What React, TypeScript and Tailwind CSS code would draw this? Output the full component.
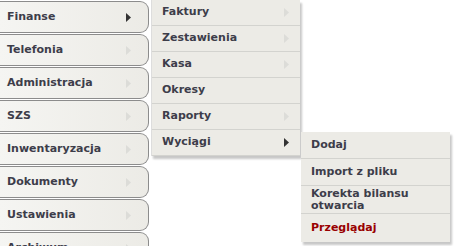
import React from "react";

const mainItems = [
	"Finanse",
	"Telefonia",
	"Administracja",
	"SZS",
	"Inwentaryzacja",
	"Dokumenty",
	"Ustawienia",
	"Archiwum",
];

const financeItems = [
	{ label: "Faktury", arrow: "light" },
	{ label: "Zestawienia", arrow: "light" },
	{ label: "Kasa", arrow: "light" },
	{ label: "Okresy", arrow: "none" },
	{ label: "Raporty", arrow: "light" },
	{ label: "Wyciągi", arrow: "dark" },
];

const Arrow: React.FC<{ dark?: boolean }> = ({ dark }) => (
	<svg width="5" height="9" viewBox="0 0 5 9" className="shrink-0">
		<polygon points="0,0 5,4.5 0,9" fill={dark ? "#333333" : "#dcdcd8"} />
	</svg>
);

const App: React.FC = () => {
	return (
		<div
			className="relative w-[456px] h-[246px] overflow-hidden bg-white text-[11px] font-bold text-[#3d3d4a]"
			style={{ fontFamily: '"DejaVu Sans", Verdana, sans-serif' }}
		>
			<div className="flex flex-col gap-[1px] pt-[1px]">
				{mainItems.map((item, i) => (
					<div
						key={item}
						className="flex items-center justify-between w-[149px] h-[32px] pl-[7px] pr-[17px] pt-[1px] border border-l-0 border-[#8c8c8c] rounded-r-[9px] bg-gradient-to-r from-[#f5f5f2] to-[#ecebe6]"
					>
						<span>{item}</span>
						<Arrow dark={i === 0} />
					</div>
				))}
			</div>

			<div className="absolute left-[151px] top-0 w-[149px] bg-[#ecebe6] border-l border-[#dddddd] shadow-[2px_3px_2px_rgba(0,0,0,0.22)]">
				{financeItems.map((item) => (
					<div
						key={item.label}
						className="flex items-center justify-between h-[26px] pl-[10px] pr-[11px] border-b border-[#d3d3cf]"
					>
						<span>{item.label}</span>
						{item.arrow !== "none" && <Arrow dark={item.arrow === "dark"} />}
					</div>
				))}
			</div>

			<div className="absolute left-[301px] top-[132px] w-[149px] bg-[#ecebe6] shadow-[2px_3px_2px_rgba(0,0,0,0.22)]">
				<div className="flex items-center h-[27px] pl-[10px] border-b border-[#d3d3cf]">Dodaj</div>
				<div className="flex items-center h-[27px] pl-[10px] border-b border-[#d3d3cf]">Import z pliku</div>
				<div className="flex flex-col justify-center h-[28px] pl-[10px] leading-[12px] border-b border-[#d3d3cf]">
					<span>Korekta bilansu</span>
					<span>otwarcia</span>
				</div>
				<div className="flex items-center h-[28px] pl-[10px] text-[#990000]">Przeglądaj</div>
			</div>
		</div>
	);
};

export default App;
